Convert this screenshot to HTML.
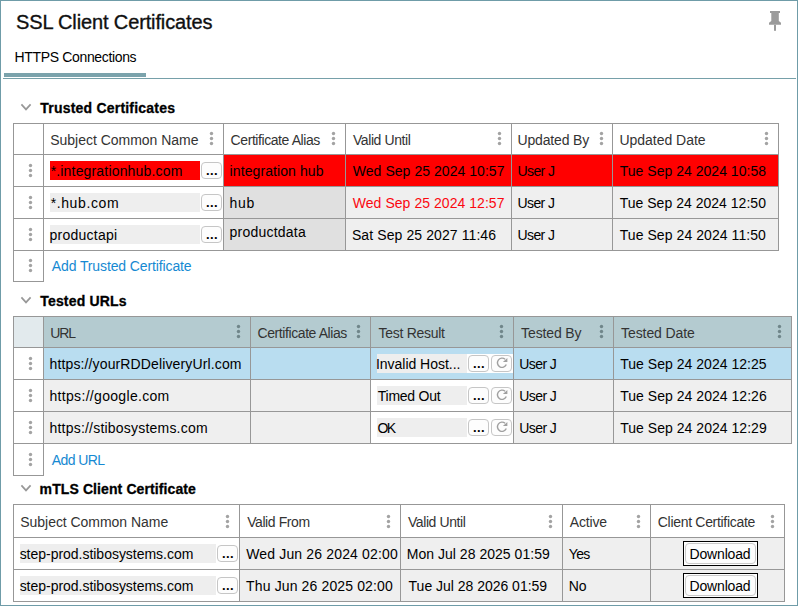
<!DOCTYPE html><html lang="en"><head><meta charset="utf-8"><title>SSL Client Certificates</title><style>
html,body{margin:0;padding:0;background:#fff}
body{position:relative;width:798px;height:606px;overflow:hidden;font-family:"Liberation Sans", sans-serif;}
.abs,.x,.c,.ln,.btn,.dl,.inp,.dots,.chev{position:absolute;box-sizing:border-box}
.frame{left:0;top:0;width:798px;height:606px;border:1px solid #6f9ca8}
.x{white-space:pre;line-height:20px;height:20px;transform-origin:0 50%;margin:0;font-weight:400}
.t{font-size:20px;color:#101010;-webkit-text-stroke:0.35px #101010}
.tab{font-size:14px;color:#000}
.h{font-size:14px;font-weight:700;color:#000;margin:0;-webkit-text-stroke:0.3px #000}
.th{font-size:14px;color:#333}
.td{font-size:14px;color:#000}
.r{font-size:14px;color:#fb0810}
.a{font-size:14px;color:#1689d2;text-decoration:none}
.ln{background:#979797}
.btn{width:21px;height:17px;border:1px solid #c6c6c6;border-radius:4px;background:#fdfdfd;padding:0;margin:0}
.btn b{position:absolute;left:4.1px;top:-1px;font:700 13px/17px "Liberation Sans", sans-serif;letter-spacing:0.4px;color:#000}
.btn svg{position:absolute;left:0;top:0}
.dl{width:75px;height:25px;border:1px solid #000;background:#fff}
.dl i{position:absolute;left:1px;top:1px;width:71px;height:21px;border:1px solid #c9c9c9;border-radius:4px;background:#fdfdfd;box-sizing:border-box}
.dots{width:5px;height:15px}
</style></head><body>
<div class="abs frame"></div>
<svg class="abs" style="left:767px;top:9px" width="16" height="24" viewBox="0 0 16 24"><g fill="#9b9b9b"><rect x="3" y="2" width="10" height="2"/><rect x="4.3" y="4" width="7.5" height="8.4"/><path d="M4.3 12 L11.8 12 L14 13.8 L14 15.8 L2 15.8 L2 13.8 Z"/><rect x="7" y="15.8" width="2" height="6"/></g></svg>
<div class="c" style="left:4px;top:73px;width:142px;height:4px;background:#7ba3ac"></div>
<div class="c" style="left:3px;top:78px;width:793px;height:1px;background:#76a0a9"></div>
<div class="ln" style="left:13px;top:123px;width:766px;height:128px;background:#979797"></div>
<div class="c" style="left:14px;top:124px;width:29px;height:30px;background:#fff"></div>
<div class="c" style="left:44px;top:124px;width:179px;height:30px;background:#fff"></div>
<div class="c" style="left:224px;top:124px;width:121px;height:30px;background:#fff"></div>
<div class="c" style="left:346px;top:124px;width:165px;height:30px;background:#fff"></div>
<div class="c" style="left:512px;top:124px;width:100px;height:30px;background:#fff"></div>
<div class="c" style="left:613px;top:124px;width:165px;height:30px;background:#fff"></div>
<div class="c" style="left:14px;top:155px;width:29px;height:31px;background:#fff"></div>
<div class="c" style="left:44px;top:155px;width:179px;height:31px;background:#fff"></div>
<div class="c" style="left:224px;top:155px;width:121px;height:31px;background:#ff0000"></div>
<div class="c" style="left:346px;top:155px;width:165px;height:31px;background:#ff0000"></div>
<div class="c" style="left:512px;top:155px;width:100px;height:31px;background:#ff0000"></div>
<div class="c" style="left:613px;top:155px;width:165px;height:31px;background:#ff0000"></div>
<div class="c" style="left:14px;top:187px;width:29px;height:31px;background:#fff"></div>
<div class="c" style="left:44px;top:187px;width:179px;height:31px;background:#fff"></div>
<div class="c" style="left:224px;top:187px;width:121px;height:31px;background:#e0e0e0"></div>
<div class="c" style="left:346px;top:187px;width:165px;height:31px;background:#efefef"></div>
<div class="c" style="left:512px;top:187px;width:100px;height:31px;background:#efefef"></div>
<div class="c" style="left:613px;top:187px;width:165px;height:31px;background:#efefef"></div>
<div class="c" style="left:14px;top:219px;width:29px;height:31px;background:#fff"></div>
<div class="c" style="left:44px;top:219px;width:179px;height:31px;background:#fff"></div>
<div class="c" style="left:224px;top:219px;width:121px;height:31px;background:#e0e0e0"></div>
<div class="c" style="left:346px;top:219px;width:165px;height:31px;background:#efefef"></div>
<div class="c" style="left:512px;top:219px;width:100px;height:31px;background:#efefef"></div>
<div class="c" style="left:613px;top:219px;width:165px;height:31px;background:#efefef"></div>
<div class="ln" style="left:13px;top:250px;width:31px;height:32px;background:#979797"></div>
<div class="c" style="left:14px;top:251px;width:29px;height:30px;background:#fff"></div>
<div class="inp" style="left:50px;top:161px;width:150px;height:19px;background:#ff0000"></div>
<div class="inp" style="left:50px;top:193px;width:150px;height:19px;background:#eee"></div>
<div class="inp" style="left:50px;top:225px;width:150px;height:19px;background:#eee"></div>
<div class="btn" style="left:201px;top:162px"><b>...</b></div>
<div class="btn" style="left:201px;top:194px"><b>...</b></div>
<div class="btn" style="left:201px;top:226px"><b>...</b></div>
<svg class="dots" style="left:209.1px;top:131.3px" width="5" height="15" viewBox="0 0 5 15"><g fill="#a3a3a3"><circle cx="2.5" cy="2.5" r="1.7"/><circle cx="2.5" cy="7.5" r="1.7"/><circle cx="2.5" cy="12.5" r="1.7"/></g></svg>
<svg class="dots" style="left:331.1px;top:131.3px" width="5" height="15" viewBox="0 0 5 15"><g fill="#a3a3a3"><circle cx="2.5" cy="2.5" r="1.7"/><circle cx="2.5" cy="7.5" r="1.7"/><circle cx="2.5" cy="12.5" r="1.7"/></g></svg>
<svg class="dots" style="left:497.1px;top:131.3px" width="5" height="15" viewBox="0 0 5 15"><g fill="#a3a3a3"><circle cx="2.5" cy="2.5" r="1.7"/><circle cx="2.5" cy="7.5" r="1.7"/><circle cx="2.5" cy="12.5" r="1.7"/></g></svg>
<svg class="dots" style="left:599.1px;top:131.3px" width="5" height="15" viewBox="0 0 5 15"><g fill="#a3a3a3"><circle cx="2.5" cy="2.5" r="1.7"/><circle cx="2.5" cy="7.5" r="1.7"/><circle cx="2.5" cy="12.5" r="1.7"/></g></svg>
<svg class="dots" style="left:764.1px;top:131.3px" width="5" height="15" viewBox="0 0 5 15"><g fill="#a3a3a3"><circle cx="2.5" cy="2.5" r="1.7"/><circle cx="2.5" cy="7.5" r="1.7"/><circle cx="2.5" cy="12.5" r="1.7"/></g></svg>
<svg class="dots" style="left:28.1px;top:162.5px" width="5" height="15" viewBox="0 0 5 15"><g fill="#a3a3a3"><circle cx="2.5" cy="2.5" r="1.7"/><circle cx="2.5" cy="7.5" r="1.7"/><circle cx="2.5" cy="12.5" r="1.7"/></g></svg>
<svg class="dots" style="left:28.1px;top:194.5px" width="5" height="15" viewBox="0 0 5 15"><g fill="#a3a3a3"><circle cx="2.5" cy="2.5" r="1.7"/><circle cx="2.5" cy="7.5" r="1.7"/><circle cx="2.5" cy="12.5" r="1.7"/></g></svg>
<svg class="dots" style="left:28.1px;top:226.5px" width="5" height="15" viewBox="0 0 5 15"><g fill="#a3a3a3"><circle cx="2.5" cy="2.5" r="1.7"/><circle cx="2.5" cy="7.5" r="1.7"/><circle cx="2.5" cy="12.5" r="1.7"/></g></svg>
<svg class="dots" style="left:28.1px;top:257.5px" width="5" height="15" viewBox="0 0 5 15"><g fill="#a3a3a3"><circle cx="2.5" cy="2.5" r="1.7"/><circle cx="2.5" cy="7.5" r="1.7"/><circle cx="2.5" cy="12.5" r="1.7"/></g></svg>
<div class="ln" style="left:13px;top:316px;width:779px;height:128px;background:#979797"></div>
<div class="c" style="left:14px;top:317px;width:29px;height:30px;background:#e2eaed"></div>
<div class="c" style="left:44px;top:317px;width:206px;height:30px;background:#b4cbd0"></div>
<div class="c" style="left:251px;top:317px;width:119px;height:30px;background:#b4cbd0"></div>
<div class="c" style="left:371px;top:317px;width:142px;height:30px;background:#b4cbd0"></div>
<div class="c" style="left:514px;top:317px;width:99px;height:30px;background:#b4cbd0"></div>
<div class="c" style="left:614px;top:317px;width:177px;height:30px;background:#b4cbd0"></div>
<div class="c" style="left:14px;top:348px;width:29px;height:31px;background:#fff"></div>
<div class="c" style="left:44px;top:348px;width:206px;height:31px;background:#b9ddf0"></div>
<div class="c" style="left:251px;top:348px;width:119px;height:31px;background:#b9ddf0"></div>
<div class="c" style="left:371px;top:348px;width:142px;height:31px;background:#b9ddf0"></div>
<div class="c" style="left:514px;top:348px;width:99px;height:31px;background:#b9ddf0"></div>
<div class="c" style="left:614px;top:348px;width:177px;height:31px;background:#b9ddf0"></div>
<div class="c" style="left:14px;top:380px;width:29px;height:31px;background:#fff"></div>
<div class="c" style="left:44px;top:380px;width:206px;height:31px;background:#efefef"></div>
<div class="c" style="left:251px;top:380px;width:119px;height:31px;background:#efefef"></div>
<div class="c" style="left:371px;top:380px;width:142px;height:31px;background:#fff"></div>
<div class="c" style="left:514px;top:380px;width:99px;height:31px;background:#efefef"></div>
<div class="c" style="left:614px;top:380px;width:177px;height:31px;background:#efefef"></div>
<div class="c" style="left:14px;top:412px;width:29px;height:31px;background:#fff"></div>
<div class="c" style="left:44px;top:412px;width:206px;height:31px;background:#efefef"></div>
<div class="c" style="left:251px;top:412px;width:119px;height:31px;background:#efefef"></div>
<div class="c" style="left:371px;top:412px;width:142px;height:31px;background:#fff"></div>
<div class="c" style="left:514px;top:412px;width:99px;height:31px;background:#efefef"></div>
<div class="c" style="left:614px;top:412px;width:177px;height:31px;background:#efefef"></div>
<div class="ln" style="left:13px;top:443px;width:31px;height:33px;background:#979797"></div>
<div class="c" style="left:14px;top:444px;width:29px;height:31px;background:#fff"></div>
<div class="inp" style="left:377px;top:354px;width:90px;height:19px;background:#eee"></div>
<div class="inp" style="left:467px;top:354px;width:46px;height:19px;background:#fff"></div>
<div class="btn" style="left:468px;top:355px"><b>...</b></div>
<div class="btn" style="left:491px;top:355px"><svg width="19" height="15" viewBox="0 0 19 15"><path d="M13.1 3.3 A4.6 4.6 0 1 0 14.3 8.5" fill="none" stroke="#a0a0a0" stroke-width="1.4"/><path d="M15.4 1.9 L15.4 5.9 L10.9 5.9 Z" fill="#a0a0a0"/></svg></div>
<div class="inp" style="left:377px;top:386px;width:90px;height:19px;background:#eee"></div>
<div class="inp" style="left:467px;top:386px;width:46px;height:19px;background:#fff"></div>
<div class="btn" style="left:468px;top:387px"><b>...</b></div>
<div class="btn" style="left:491px;top:387px"><svg width="19" height="15" viewBox="0 0 19 15"><path d="M13.1 3.3 A4.6 4.6 0 1 0 14.3 8.5" fill="none" stroke="#a0a0a0" stroke-width="1.4"/><path d="M15.4 1.9 L15.4 5.9 L10.9 5.9 Z" fill="#a0a0a0"/></svg></div>
<div class="inp" style="left:377px;top:418px;width:90px;height:19px;background:#eee"></div>
<div class="inp" style="left:467px;top:418px;width:46px;height:19px;background:#fff"></div>
<div class="btn" style="left:468px;top:419px"><b>...</b></div>
<div class="btn" style="left:491px;top:419px"><svg width="19" height="15" viewBox="0 0 19 15"><path d="M13.1 3.3 A4.6 4.6 0 1 0 14.3 8.5" fill="none" stroke="#a0a0a0" stroke-width="1.4"/><path d="M15.4 1.9 L15.4 5.9 L10.9 5.9 Z" fill="#a0a0a0"/></svg></div>
<svg class="dots" style="left:236.0px;top:324.3px" width="5" height="15" viewBox="0 0 5 15"><g fill="#70868a"><circle cx="2.5" cy="2.5" r="1.7"/><circle cx="2.5" cy="7.5" r="1.7"/><circle cx="2.5" cy="12.5" r="1.7"/></g></svg>
<svg class="dots" style="left:356.0px;top:324.3px" width="5" height="15" viewBox="0 0 5 15"><g fill="#70868a"><circle cx="2.5" cy="2.5" r="1.7"/><circle cx="2.5" cy="7.5" r="1.7"/><circle cx="2.5" cy="12.5" r="1.7"/></g></svg>
<svg class="dots" style="left:499.0px;top:324.3px" width="5" height="15" viewBox="0 0 5 15"><g fill="#70868a"><circle cx="2.5" cy="2.5" r="1.7"/><circle cx="2.5" cy="7.5" r="1.7"/><circle cx="2.5" cy="12.5" r="1.7"/></g></svg>
<svg class="dots" style="left:599.0px;top:324.3px" width="5" height="15" viewBox="0 0 5 15"><g fill="#70868a"><circle cx="2.5" cy="2.5" r="1.7"/><circle cx="2.5" cy="7.5" r="1.7"/><circle cx="2.5" cy="12.5" r="1.7"/></g></svg>
<svg class="dots" style="left:777.0px;top:324.3px" width="5" height="15" viewBox="0 0 5 15"><g fill="#70868a"><circle cx="2.5" cy="2.5" r="1.7"/><circle cx="2.5" cy="7.5" r="1.7"/><circle cx="2.5" cy="12.5" r="1.7"/></g></svg>
<svg class="dots" style="left:28.1px;top:355.5px" width="5" height="15" viewBox="0 0 5 15"><g fill="#a3a3a3"><circle cx="2.5" cy="2.5" r="1.7"/><circle cx="2.5" cy="7.5" r="1.7"/><circle cx="2.5" cy="12.5" r="1.7"/></g></svg>
<svg class="dots" style="left:28.1px;top:387.5px" width="5" height="15" viewBox="0 0 5 15"><g fill="#a3a3a3"><circle cx="2.5" cy="2.5" r="1.7"/><circle cx="2.5" cy="7.5" r="1.7"/><circle cx="2.5" cy="12.5" r="1.7"/></g></svg>
<svg class="dots" style="left:28.1px;top:419.5px" width="5" height="15" viewBox="0 0 5 15"><g fill="#a3a3a3"><circle cx="2.5" cy="2.5" r="1.7"/><circle cx="2.5" cy="7.5" r="1.7"/><circle cx="2.5" cy="12.5" r="1.7"/></g></svg>
<svg class="dots" style="left:28.1px;top:451.5px" width="5" height="15" viewBox="0 0 5 15"><g fill="#a3a3a3"><circle cx="2.5" cy="2.5" r="1.7"/><circle cx="2.5" cy="7.5" r="1.7"/><circle cx="2.5" cy="12.5" r="1.7"/></g></svg>
<div class="ln" style="left:13px;top:504px;width:772px;height:98px;background:#979797"></div>
<div class="c" style="left:14px;top:505px;width:225px;height:32px;background:#fff"></div>
<div class="c" style="left:240px;top:505px;width:160px;height:32px;background:#fff"></div>
<div class="c" style="left:401px;top:505px;width:161px;height:32px;background:#fff"></div>
<div class="c" style="left:563px;top:505px;width:87px;height:32px;background:#fff"></div>
<div class="c" style="left:651px;top:505px;width:133px;height:32px;background:#fff"></div>
<div class="c" style="left:14px;top:538px;width:225px;height:31px;background:#fff"></div>
<div class="c" style="left:240px;top:538px;width:160px;height:31px;background:#efefef"></div>
<div class="c" style="left:401px;top:538px;width:161px;height:31px;background:#efefef"></div>
<div class="c" style="left:563px;top:538px;width:87px;height:31px;background:#efefef"></div>
<div class="c" style="left:651px;top:538px;width:133px;height:31px;background:#efefef"></div>
<div class="c" style="left:14px;top:570px;width:225px;height:31px;background:#fff"></div>
<div class="c" style="left:240px;top:570px;width:160px;height:31px;background:#efefef"></div>
<div class="c" style="left:401px;top:570px;width:161px;height:31px;background:#efefef"></div>
<div class="c" style="left:563px;top:570px;width:87px;height:31px;background:#efefef"></div>
<div class="c" style="left:651px;top:570px;width:133px;height:31px;background:#efefef"></div>
<div class="inp" style="left:20px;top:544px;width:196px;height:19px;background:#eee"></div>
<div class="btn" style="left:217px;top:545px"><b>...</b></div>
<div class="dl" style="left:683px;top:541px"><i></i></div>
<div class="inp" style="left:20px;top:576px;width:196px;height:19px;background:#eee"></div>
<div class="btn" style="left:217px;top:577px"><b>...</b></div>
<div class="dl" style="left:683px;top:573px"><i></i></div>
<svg class="dots" style="left:225.0px;top:513.6px" width="5" height="15" viewBox="0 0 5 15"><g fill="#a3a3a3"><circle cx="2.5" cy="2.5" r="1.7"/><circle cx="2.5" cy="7.5" r="1.7"/><circle cx="2.5" cy="12.5" r="1.7"/></g></svg>
<svg class="dots" style="left:386.0px;top:513.6px" width="5" height="15" viewBox="0 0 5 15"><g fill="#a3a3a3"><circle cx="2.5" cy="2.5" r="1.7"/><circle cx="2.5" cy="7.5" r="1.7"/><circle cx="2.5" cy="12.5" r="1.7"/></g></svg>
<svg class="dots" style="left:548.0px;top:513.6px" width="5" height="15" viewBox="0 0 5 15"><g fill="#a3a3a3"><circle cx="2.5" cy="2.5" r="1.7"/><circle cx="2.5" cy="7.5" r="1.7"/><circle cx="2.5" cy="12.5" r="1.7"/></g></svg>
<svg class="dots" style="left:636.0px;top:513.6px" width="5" height="15" viewBox="0 0 5 15"><g fill="#a3a3a3"><circle cx="2.5" cy="2.5" r="1.7"/><circle cx="2.5" cy="7.5" r="1.7"/><circle cx="2.5" cy="12.5" r="1.7"/></g></svg>
<svg class="dots" style="left:770.0px;top:513.6px" width="5" height="15" viewBox="0 0 5 15"><g fill="#a3a3a3"><circle cx="2.5" cy="2.5" r="1.7"/><circle cx="2.5" cy="7.5" r="1.7"/><circle cx="2.5" cy="12.5" r="1.7"/></g></svg>
<svg class="chev" style="left:19px;top:101px" width="14" height="12" viewBox="0 0 14 12"><path d="M2.4 3.4 L7 8.4 L11.6 3.4" fill="none" stroke="#989898" stroke-width="1.7"/></svg>
<svg class="chev" style="left:19px;top:294px" width="14" height="12" viewBox="0 0 14 12"><path d="M2.4 3.4 L7 8.4 L11.6 3.4" fill="none" stroke="#989898" stroke-width="1.7"/></svg>
<svg class="chev" style="left:19px;top:482px" width="14" height="12" viewBox="0 0 14 12"><path d="M2.4 3.4 L7 8.4 L11.6 3.4" fill="none" stroke="#989898" stroke-width="1.7"/></svg>
<h1 class="x t" style="left:15.98px;top:12.0px;letter-spacing:-0.132px">SSL Client Certificates</h1>
<div class="x tab" style="left:14.54px;top:47.0px;letter-spacing:-0.346px">HTTPS Connections</div>
<h2 class="x h" style="left:40.24px;top:98.0px;letter-spacing:0.214px">Trusted Certificates</h2>
<h2 class="x h" style="left:40.24px;top:291.0px;letter-spacing:0.176px">Tested URLs</h2>
<h2 class="x h" style="left:39.6px;top:479.0px;letter-spacing:0.102px">mTLS Client Certificate</h2>
<div class="x th" style="left:50.25px;top:130.0px;letter-spacing:-0.019px">Subject Common Name</div>
<div class="x th" style="left:230.62px;top:130.0px;letter-spacing:-0.426px">Certificate Alias</div>
<div class="x th" style="left:352.95px;top:130.0px;letter-spacing:-0.412px">Valid Until</div>
<div class="x th" style="left:517.49px;top:130.0px;letter-spacing:-0.149px">Updated By</div>
<div class="x th" style="left:619.49px;top:130.0px;letter-spacing:-0.032px">Updated Date</div>
<div class="x td" style="left:50.66px;top:161.0px;letter-spacing:0.17px">*.integrationhub.com</div>
<div class="x td" style="left:229.6px;top:161.0px;letter-spacing:0.093px">integration hub</div>
<div class="x td" style="left:352.79px;top:161.0px;letter-spacing:0.047px">Wed Sep 25 2024 10:57</div>
<div class="x td" style="left:517.49px;top:161.0px;letter-spacing:-0.592px">User J</div>
<div class="x td" style="left:619.7px;top:161.0px;letter-spacing:0.024px">Tue Sep 24 2024 10:58</div>
<div class="x td" style="left:50.66px;top:193.0px;letter-spacing:0.606px">*.hub.com</div>
<div class="x td" style="left:229.6px;top:193.0px;letter-spacing:0.669px">hub</div>
<div class="x r" style="left:352.79px;top:193.0px;letter-spacing:0.047px">Wed Sep 25 2024 12:57</div>
<div class="x td" style="left:517.49px;top:193.0px;letter-spacing:-0.592px">User J</div>
<div class="x td" style="left:619.7px;top:193.0px;letter-spacing:0.02px">Tue Sep 24 2024 12:50</div>
<div class="x td" style="left:49.6px;top:225.0px;letter-spacing:0.241px">productapi</div>
<div class="x td" style="left:229.6px;top:222.0px;letter-spacing:0.218px">productdata</div>
<div class="x td" style="left:351.95px;top:225.0px;letter-spacing:0.095px">Sat Sep 25 2027 11:46</div>
<div class="x td" style="left:517.49px;top:225.0px;letter-spacing:-0.592px">User J</div>
<div class="x td" style="left:619.7px;top:225.0px;letter-spacing:0.07px">Tue Sep 24 2024 11:50</div>
<a class="x a" style="left:51.85px;top:256.0px;letter-spacing:-0.119px">Add Trusted Certificate</a>
<div class="x th" style="left:50.29px;top:323.0px;letter-spacing:-1.145px">URL</div>
<div class="x th" style="left:257.52px;top:323.0px;letter-spacing:-0.414px">Certificate Alias</div>
<div class="x th" style="left:378.6px;top:323.0px;letter-spacing:-0.29px">Test Result</div>
<div class="x th" style="left:521.1px;top:323.0px;letter-spacing:-0.124px">Tested By</div>
<div class="x th" style="left:621.1px;top:323.0px;letter-spacing:-0.092px">Tested Date</div>
<div class="x td" style="left:49.5px;top:354.0px;letter-spacing:0.132px">https://yourRDDeliveryUrl.com</div>
<div class="x td" style="left:376.0px;top:354.0px;letter-spacing:-0.031px">Invalid Host...</div>
<div class="x td" style="left:519.29px;top:354.0px;letter-spacing:-0.592px">User J</div>
<div class="x td" style="left:620.2px;top:354.0px;letter-spacing:0.031px">Tue Sep 24 2024 12:25</div>
<div class="x td" style="left:49.5px;top:386.0px;letter-spacing:0.316px">https://google.com</div>
<div class="x td" style="left:377.8px;top:386.0px;letter-spacing:-0.256px">Timed Out</div>
<div class="x td" style="left:519.29px;top:386.0px;letter-spacing:-0.592px">User J</div>
<div class="x td" style="left:620.2px;top:386.0px;letter-spacing:0.034px">Tue Sep 24 2024 12:26</div>
<div class="x td" style="left:49.5px;top:418.0px;letter-spacing:0.208px">https://stibosystems.com</div>
<div class="x td" style="left:377.38px;top:418.0px;letter-spacing:-1.553px">OK</div>
<div class="x td" style="left:519.29px;top:418.0px;letter-spacing:-0.592px">User J</div>
<div class="x td" style="left:620.2px;top:418.0px;letter-spacing:0.034px">Tue Sep 24 2024 12:29</div>
<a class="x a" style="left:51.85px;top:450.0px;letter-spacing:-0.613px">Add URL</a>
<div class="x th" style="left:20.25px;top:512.0px;letter-spacing:-0.036px">Subject Common Name</div>
<div class="x th" style="left:247.15px;top:512.0px;letter-spacing:-0.411px">Valid From</div>
<div class="x th" style="left:407.95px;top:512.0px;letter-spacing:-0.412px">Valid Until</div>
<div class="x th" style="left:569.85px;top:512.0px;letter-spacing:-0.188px">Active</div>
<div class="x th" style="left:657.82px;top:512.0px;letter-spacing:-0.308px">Client Certificate</div>
<div class="x td" style="left:19.63px;top:544.0px;letter-spacing:-0.022px">step-prod.stibosystems.com</div>
<div class="x td" style="left:246.19px;top:544.0px;letter-spacing:0.156px">Wed Jun 26 2024 02:00</div>
<div class="x td" style="left:406.74px;top:544.0px;letter-spacing:0.028px">Mon Jul 28 2025 01:59</div>
<div class="x td" style="left:568.83px;top:544.0px;letter-spacing:-0.717px">Yes</div>
<div class="x td" style="left:689.54px;top:544.0px;letter-spacing:-0.171px">Download</div>
<div class="x td" style="left:19.63px;top:576.0px;letter-spacing:-0.022px">step-prod.stibosystems.com</div>
<div class="x td" style="left:246.1px;top:576.0px;letter-spacing:0.131px">Thu Jun 26 2025 02:00</div>
<div class="x td" style="left:408.6px;top:576.0px;letter-spacing:-0.016px">Tue Jul 28 2026 01:59</div>
<div class="x td" style="left:568.64px;top:576.0px;letter-spacing:-0.009px">No</div>
<div class="x td" style="left:689.54px;top:576.0px;letter-spacing:-0.171px">Download</div>
</body></html>
